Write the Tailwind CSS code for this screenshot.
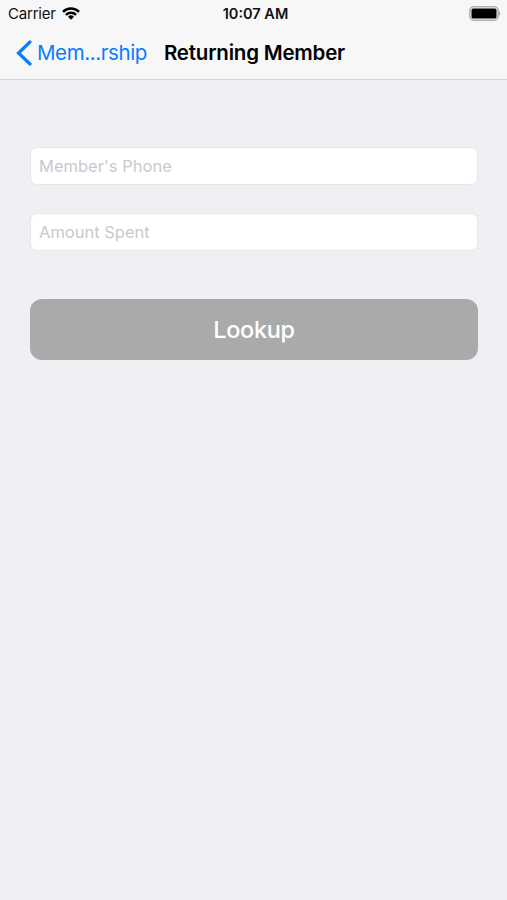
<!DOCTYPE html>
<html lang="en">
<head>
  <meta charset="UTF-8" />
  <meta name="viewport" content="width=device-width, initial-scale=1.0"/>
  <title>Returning Member</title>
  <script src="https://cdn.jsdelivr.net/npm/@tailwindcss/browser@4"></script>
</head>
<body class="bg-[#efeff4] min-h-screen font-['Inter',sans-serif] text-black">

  <!-- HEADER -->
  <header class="h-20 bg-[#f7f7f8] border-b border-[#d6d6da]">
    <!-- STATUS BAR -->
    <div class="h-[27px] grid grid-cols-3 items-center pl-2 pr-[6px] text-[15px] leading-[27px] text-[#111]">
      <div class="flex items-center gap-[6px]">
        <span class="tracking-[-0.2px]">Carrier</span>
        <svg class="w-[18px] h-[13px]" viewBox="0 0 18 13" fill="none" stroke="#000" stroke-width="2.4">
          <path d="M1 4.8a11.3 11.3 0 0 1 16 0" />
          <path d="M3.9 7.8a7.2 7.2 0 0 1 10.2 0" />
          <path d="M9 12.8 6 9.8a4.3 4.3 0 0 1 6 0z" fill="#000" stroke="none" />
        </svg>
      </div>
      <span class="pl-[2px] text-center text-[14.5px] font-semibold">10:07 AM</span>
      <svg class="justify-self-end w-[32px] h-[15px]" viewBox="0 0 32 15">
        <rect x="0.800" y="0.800" width="28.400" height="13.400" rx="4" fill="none" stroke="#b0b0b1" stroke-width="1.600" />
        <rect x="2.500" y="2.500" width="25" height="10" rx="1.500" />
        <path d="M30 5c1.600.8 1.600 4.200 0 5z" fill="#aaa" />
      </svg>
    </div>
    <!-- NAVBAR -->
    <nav class="h-[52px] flex items-center pl-4">
      <a href="#" class="flex items-center gap-[5px] text-[#087eff] text-[20.5px] tracking-[-0.400px]">
        <svg class="w-4 h-7" viewBox="0 0 16 28" fill="none" stroke="currentColor" stroke-width="3.2" stroke-linecap="round">
          <path d="M14 3 2.500 14 14 25" />
        </svg>
        Mem...rship
      </a>
      <h1 class="ml-[17px] text-[20.5px] font-semibold tracking-[-0.200px]">Returning Member</h1>
    </nav>
  </header>

  <!-- FORM -->
  <main class="pl-[30px] pr-[29px] pt-[67px]">
    <input type="text" placeholder="Member's Phone" class="block w-full h-[38px] px-2 bg-white border border-[#e7e7eb] rounded-[7px] text-[16.5px] placeholder:text-[#c9c9cc]" />
    <input type="text" placeholder="Amount Spent" class="block mt-7 w-full h-[38px] px-2 bg-white border border-[#e7e7eb] rounded-[7px] text-[16.5px] placeholder:text-[#c9c9cc]" />
    <button class="block mt-12 w-full h-[61px] bg-[#aaa] rounded-[12px] text-white text-[23.5px] tracking-[-0.300px] font-medium">Lookup</button>
  </main>

</body>
</html>
